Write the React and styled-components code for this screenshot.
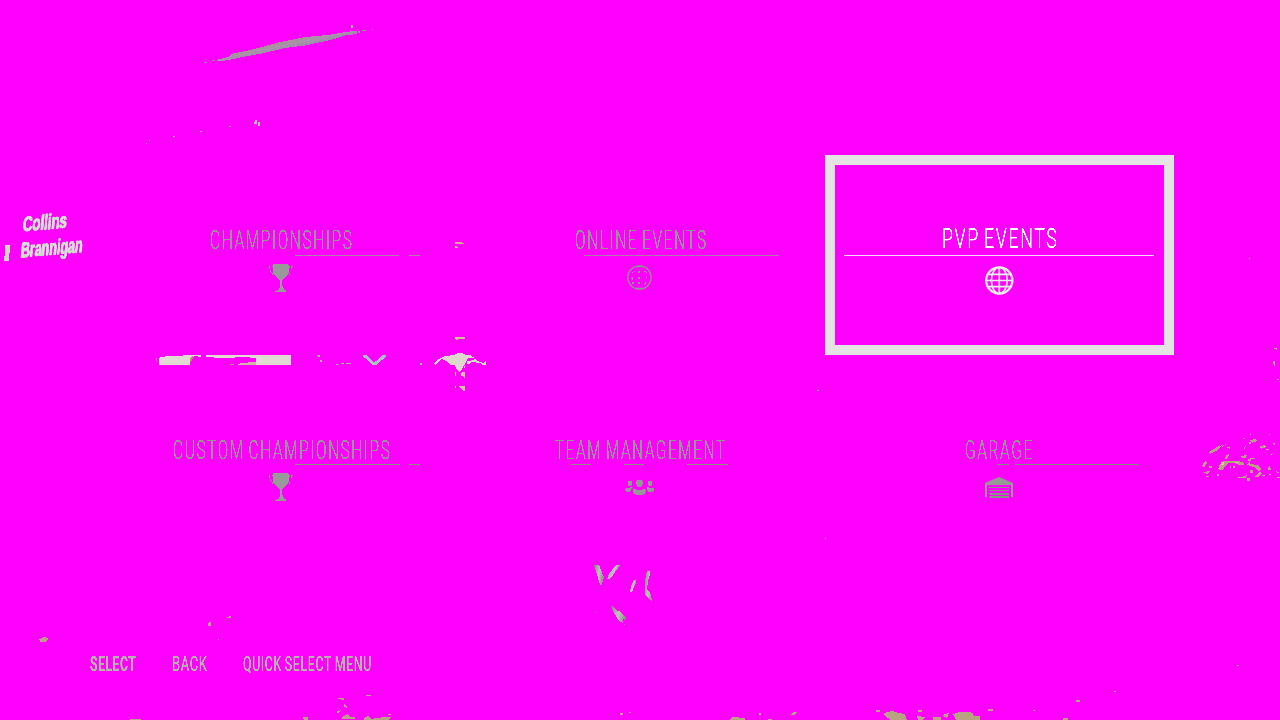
import React, { useLayoutEffect, useRef, useState } from 'react';
import styled, { createGlobalStyle } from 'styled-components';

const GlobalStyle = createGlobalStyle`
  * { box-sizing: border-box; }
  body { margin: 0; background: #ff00ff; overflow: hidden; }
`;

const Screen = styled.main`
  position: relative;
  width: 1280px;
  height: 720px;
  overflow: hidden;
  background: #ff00ff;
  font-family: Roboto, 'Liberation Sans', sans-serif;
  display: flex;
  flex-direction: column;
`;

const Scenery = styled.svg`
  position: absolute;
  inset: 0;
`;

const Decal = styled.div`
  position: absolute;
  left: ${(p) => p.$x}px;
  top: ${(p) => p.$y}px;
  transform: rotate(-5deg) skewX(-10deg);
  transform-origin: left bottom;
  font: 400 22px/22px 'Liberation Sans', sans-serif;
  color: #e2e3e0;
  -webkit-text-stroke: 0.6px #c4c6be;
`;

const TileGrid = styled.nav`
  position: relative;
  display: grid;
  grid-template-columns: repeat(3, 349px);
  grid-auto-rows: 200px;
  gap: 10px;
  padding: 155px 0 0 107px;
`;

const Tile = styled.section`
  display: flex;
  flex-direction: column;
  align-items: flex-start;
  border: 10px solid ${(p) => (p.$selected ? '#e4e4e4' : 'transparent')};
  padding-top: ${(p) => p.$pad}px;
  color: ${(p) => (p.$selected ? '#ffffff' : '#929892')};
`;

const TileTitle = styled.div`
  display: flex;
  justify-content: center;
  width: ${(p) => p.$w}px;
`;

const Rule = styled.div`
  display: flex;
  width: 310px;
  height: 1px;
  margin: ${(p) => p.$gap}px 0 0 9px;
`;

const RulePart = styled.i`
  height: 1px;
  width: ${(p) => p.$w}px;
  margin-left: ${(p) => p.$skip}px;
  background: ${(p) => p.$color};
`;

const IconSlot = styled.div`
  display: flex;
  justify-content: center;
  width: ${(p) => p.$w}px;
  margin-top: ${(p) => p.$gap}px;
  svg { display: block; }
`;

const FitBox = styled.div`
  width: ${(p) => p.$width}px;
  height: ${(p) => p.$size}px;
  font-size: ${(p) => p.$size}px;
  line-height: ${(p) => p.$size}px;
  font-weight: ${(p) => p.$weight};
  letter-spacing: ${(p) => p.$track}px;
  word-spacing: ${(p) => -p.$track}px;
  white-space: nowrap;
  filter: url(#${(p) => p.$edge});
`;

const FitText = styled.span`
  display: inline-block;
  transform-origin: left center;
`;

const Hints = styled.footer`
  position: relative;
  display: flex;
  padding: 89px 0 0 90px;
  color: #b3b6a6;
`;

const Hint = styled.div`
  margin-right: ${(p) => p.$after}px;
`;

function Condensed({ text, width, size, weight = 300, track = 2, edge = 'crisp' }) {
  const ref = useRef(null);
  const [scale, setScale] = useState(0.7);
  useLayoutEffect(() => {
    setScale(width / (ref.current.offsetWidth - track));
  }, [width, text, track]);
  return (
    <FitBox $width={width} $size={size} $weight={weight} $track={track} $edge={edge}>
      <FitText ref={ref} style={{ transform: `scaleX(${scale})` }}>{text}</FitText>
    </FitBox>
  );
}

const Trophy = () => (
  <svg width="24" height="28" viewBox="0 0 24 28" shapeRendering="crispEdges">
    <path fill="#999999" d="M4 0H19V1H20V9H19V11H18V12H17V13H16V14H15V15H14V16H13V22H14V24H15V26H17V28H6V27H8V26H10V24H11V16H10V15H9V14H8V13H7V12H6V11H5V10H4Z" />
    <path fill="#829b7c" d="M0 2h1v3H0zM1 6h1v2H1zM2 8h1v1H2zM3 2h1v1H3zM3 9h1v2H3zM20 2h1v2h-1zM22 2h2v1h-1v2h-1zM21 9h-1v2h1z" />
  </svg>
);

const Globe = () => (
  <svg width="29" height="29" viewBox="0 0 29 29" fill="none" stroke="#e9eee6">
    <circle cx="14.3" cy="14.5" r="13.1" strokeWidth="2.3" />
    <ellipse cx="14.3" cy="14.5" rx="7.9" ry="13" strokeWidth="1.7" />
    <path d="M14.3 1V28M1 14.5H28M4 8.3H25M4 20.7H25" strokeWidth="1.7" />
  </svg>
);

const FaintGlobe = () => (
  <svg width="25" height="25" viewBox="0 0 25 25" fill="none" stroke="#8b9988">
    <circle cx="12.5" cy="12.5" r="11.6" strokeWidth="1.2" />
    <path d="M9 1.5H16M9 23.5H16" strokeWidth="1.6" />
    <g fill="#8b9988" stroke="none">
      <path d="M11 6h2v2h-2zM11 12h2v2h-2zM11 17h2v2h-2zM7 6h1v1H7zM17 6h2v1h-2zM5 7h1v1H5zM19 7h1v1h-1zM4 13h2v1H4zM5 12h1v3H5zM19 12h1v1h-1zM5 17h2v2H5zM18 17h1v2h-1zM17 19h1v1h-1z" />
    </g>
  </svg>
);

const Crew = () => (
  <svg width="30" height="15" viewBox="0 0 30 15" fill="#959895">
    <path d="M12 0H17L18 2V4L16 7H13L11 4V2ZM3 1H7V5L6 6H4L3 5ZM23 1H27V5L26 6H24L23 5ZM8 9H11L12 10H17L18 9H20L21 11L20 14L17 15H12L9 14L8 12Z" />
    <path d="M1 8H5V7L7 7L8 8L6 9V11L4 12H2L0 10ZM22 7H24V8H29V11L27 12H24L22 10Z" />
  </svg>
);

const GarageIcon = () => (
  <svg width="28" height="21" viewBox="0 0 28 21" fill="#969896">
    <path d="M14 0L28 6V20H26V8H2V20H0V6Z" />
    <path fill="#829580" d="M4 10H24V11H4ZM4 13H24V14H4ZM4 16H24V17H5V18H24V17H4ZM4 19H24V21H5Z" />
  </svg>
);

const TILES = [
  {
    name: 'CHAMPIONSHIPS', width: 142, pad: 63,
    rule: [[169, 104], [10, 11]], color: '#b083a5', ruleGap: 2, icon: <Trophy />, iconGap: 8,
  },
  {
    name: 'ONLINE EVENTS', width: 131, pad: 63, titleW: 329, iconW: 327,
    rule: [[99, 195]], color: '#a97fa5', ruleGap: 2, icon: <FaintGlobe />, iconGap: 9,
  },
  {
    name: 'PVP EVENTS', width: 115, pad: 60, size: 28, weight: 300, selected: true, titleW: 329, iconW: 329,
    rule: [[0, 310]], color: '#ffd6ff', ruleGap: 2, icon: <Globe />, iconGap: 10,
  },
  {
    name: 'CUSTOM CHAMPIONSHIPS', width: 217, pad: 63, titleW: 329,
    rule: [[169, 105], [9, 11]], color: '#8b8f83', ruleGap: 1, icon: <Trophy />, iconGap: 8,
  },
  {
    name: 'TEAM MANAGEMENT', width: 170, pad: 63, titleW: 328,
    rule: [[86, 20], [33, 20], [43, 41]], color: '#8b8f83', ruleGap: 1, icon: <Crew />, iconGap: 15,
  },
  {
    name: 'GARAGE', width: 67, pad: 63,
    rule: [[153, 12], [6, 124]], color: '#828e7c', ruleGap: 1, icon: <GarageIcon />, iconGap: 12,
  },
];

const HINTS = [
  { name: 'SELECT', width: 46, after: 36, weight: 600 },
  { name: 'BACK', width: 35, after: 36, weight: 400 },
  { name: 'QUICK SELECT MENU', width: 128, after: 0, weight: 400 },
];

function Backdrop() {
  return (
    <Scenery width="1280" height="720" viewBox="0 0 1280 720" shapeRendering="crispEdges">
      <defs>
        <linearGradient id="streak" gradientUnits="userSpaceOnUse" x1="283" y1="41" x2="285" y2="50">
          <stop offset="0" stopColor="#a3958b" />
          <stop offset="0.5" stopColor="#ab92ab" />
          <stop offset="1" stopColor="#9d8aad" />
        </linearGradient>
        <linearGradient id="shard" x1="0" y1="0" x2="1" y2="0.4">
          <stop offset="0" stopColor="#85857f" />
          <stop offset="0.6" stopColor="#c4c4bd" />
          <stop offset="1" stopColor="#94948c" />
        </linearGradient>
        <filter id="crisp" x="-5%" y="-10%" width="110%" height="120%">
          <feComponentTransfer><feFuncA type="discrete" tableValues="0 0 1 1 1 1" /></feComponentTransfer>
        </filter>
        <filter id="firm" x="-5%" y="-10%" width="110%" height="120%">
          <feComponentTransfer><feFuncA type="linear" slope="2.6" intercept="-0.4" /></feComponentTransfer>
        </filter>
      </defs>

      <path fill="url(#streak)" d="M216 60L228 57L231 54L250 50L262 47L280 42L305 37L328 35L346 32L357 30.5V34L345 35.5L338 38L326 41L305 45.5L285 48L262 53.5L240 57.5L228 60.3L217 61Z" />
      <path fill="#9a8f98" d="M204 62h3v1h-3zM212 60h3v1h-3zM358 31h2v2h-2zM362 30h4v1h-4zM372 29h1v1h-1z" />
      <path fill="#a9a990" d="M351 25h2v3h-2zM146 143h1v1h-1zM149 140h1v1h-1zM173 136h2v1h-2zM200 131h2v1h-2zM229 126h2v1h-2z" />
      <path fill="#aebfba" d="M255 120h2v4h-3v-2h1zM258 122h2v4h-2z" />

      <path fill="#d5d6bd" d="M5 245H10L9 261H4L5 252Z" />

      <path fill="#cfae9a" d="M455 242h7v1h2v1h-9zM455 246h2v1h1v1h-3z" />
      <path fill="#d9c08f" d="M455 337h10v2h-7v1h-2v-1h-1z" />
      <path fill="#e1dad2" d="M160 357L170 356L195 355H201V357H198V356H194L192 358L190 364V365H159V359ZM206 355H291V365H256V358H250V357H235V358H214V357H206Z" />
      <path fill="#d3b5a2" d="M240 363h8v-1h8v3h-18v-1h2z" />
      <path fill="#b88a72" d="M156 358h1v3h-1zM230 364h4v1h-4zM190 359l1-2 2-1v2l-2 4h-1z" />
      <path fill="#aab294" d="M317 355h3v2h-2v-1h-1zM320 360h2v2h-2zM336 364h2v1h-2zM341 363h3v1h-3zM346 363h5v1h-5zM420 363h2v2h-2z" />
      <path d="M363 355H366L372 361L374 362L376 361L383 355H386V357L378 363L376 365H372L370 362L363 356.5Z" fill="#a9c2c6" />
      <path fill="#ddd8cb" d="M433 364L436 361L441 358L445 356L455 355V354L458 353H463V354L467 355H470L472 357H474V358L468 358L466 362L462 369L459 372L456 369L455 365H450L446 361L442 359L439 361L436 365ZM467 361H470L475 359L478 361L480 362L484 363L486 360V365H482L480 363L476 363L475 362H471L469 364H467Z" />
      <path fill="#d8c39b" d="M455 372h1v4h-1zM462 372h3v6h-1l-2-2h-1v-3zM455 386h1v2h-1zM459 386h6v5h-2l-2-2zM464 366h1v2h-1z" />

      <path fill="url(#shard)" d="M594 565H599L601 570L603.5 576V579L601 586L599 582L597 574Z" />
      <path fill="url(#shard)" d="M616 565H620L613 575L610 579H607L609 574Z" />
      <path fill="url(#shard)" d="M634 580H636V583L634 587L632 592H630L631 586Z" />
      <path fill="url(#shard)" d="M647 571H650V574L648 581L647 590L650 592L652.5 602L649 599L645 594V580Z" />
      <path fill="url(#shard)" d="M611 606H613L617 611H620L624 616L626 618L625 621L623 619V623L619 621L614 613Z" />
      <path fill="#8a8a82" d="M596 612h1v1h-1zM624 624h1v1h-1z" />

      <g fill="#b7a382">
        <path d="M39 639L42 638L44 637L48 638V640L46 641.5H40ZM209 622H211V626H208V624ZM227 617L231 616V618H227ZM218 639h1v1h-1z" />
        <path d="M1274 348h3v2h-1v-1h-2zM1273 361h2v5h-1v-2h-1zM1277 379h2v1h-2zM1249 258h1v1h-1zM817 390h2v1h-2zM825 538h1v1h-1z" />
        <path d="M1209 452L1214 449L1219 446L1222 445L1218 450L1210 454ZM1223 445L1227 444L1222 447ZM1227 447h3v2h-1v-1h-2z" />
        <path d="M1243 438h2v1h-2zM1250 434h1v1h-1zM1269 434h1v1h-1zM1250 440L1256 439L1257 441L1252 443ZM1259 447L1264 445L1266 447L1261 449ZM1273 443h2v2h-1v-1h-1z" />
        <path d="M1243 448L1246 446L1245 449ZM1266 449h3v1h-3zM1270 454L1275 453L1271 455ZM1249 442h2v2h-2z" />
        <path d="M1226 455L1229 454L1228 458L1225 459ZM1241 456L1247 455L1246 458H1242ZM1205 461L1207 463L1204 468L1202 466ZM1209 466h3v2h-3z" />
        <path d="M1218 469L1220 464L1224 461H1232L1238 461L1244 463V465H1239L1235 463H1229L1225 466L1223 470H1219ZM1230 466h1v2h-1zM1233 466h2v2h-2z" />
        <path d="M1249 462L1248 459L1252 458L1258 459H1251L1250 464L1257 465L1261 469L1259 471L1254 467L1247 465Z" />
        <path d="M1270 465L1271 470H1268V468ZM1204 472L1210 471L1208 474L1204 473ZM1217 474h2v2h-2zM1206 476h3v1h-3zM1236 478L1245 476L1247 475L1246 478ZM1250 470h3v3h-3zM1256 475L1260 472L1262 474L1258 477L1255 477ZM1247 478h3v3h-3zM1262 475h3v1h-3zM1276 471L1280 473H1277ZM1269 474h2v1h-2zM1277 477h3v1h-3z" />
        <path d="M338 698h6v2h-3v-1h-3zM366 695h5v1h-5zM344 704L347 706V708L344 707ZM335 712L341 710L338 713ZM303 717H308V720H304ZM342 717L348 714L350 717H355V719H342ZM364 718L368 716L372 719L376 718L385 717H391L388 720H364ZM388 714h3v1h-3zM130 719h11v1h-11z" />
        <path d="M620 713h3v2h-3zM629 712h2v1h-2zM730 719L733 717L745 718V720H730ZM759 713h2v2h-2zM768 719h4v1h-4zM790 715L793 712L797 712L794 715ZM876 710h4v2h-4zM884 713L892 711L899 713L905 714L907 720H891L885 716ZM918 710h4v2h-4zM917 716L925 717L923 720H918ZM933 717h8v3h-8zM942 715L949 713L947 718ZM953 714L960 712H968L973 713L974 716L980 716V720H956ZM988 709h5v2h-5zM1033 710h2v1h-2zM1063 718h5v2h-5zM1076 700h4v2h-4zM1114 691h2v1h-2zM1237 665h2v1h-2z" />
      </g>
      <path fill="#d7c8a4" d="M1221 462h3v3h-3zM1264 446h1v1h-1zM1235 462h3v1h-3z" />
    </Scenery>
  );
}

export default function App() {
  return (
    <Screen>
      <GlobalStyle />
      <Backdrop />
      <Decal $x={22} $y={214}><Condensed text="Collins" width={44} size={22} weight={700} track={0} edge="firm" /></Decal>
      <Decal $x={20} $y={240}><Condensed text="Brannigan" width={62} size={22} weight={700} track={0} edge="firm" /></Decal>
      <TileGrid>
        {TILES.map((t) => (
          <Tile key={t.name} $selected={t.selected} $pad={t.pad}>
            <TileTitle $w={t.titleW || 327}>
              <Condensed text={t.name} width={t.width} size={t.size || 25} weight={t.weight} track={2.5} edge={t.selected ? 'firm' : 'crisp'} />
            </TileTitle>
            <Rule $gap={t.ruleGap}>
              {t.rule.map(([skip, w], i) => (
                <RulePart key={i} $skip={skip} $w={w} $color={t.color} />
              ))}
            </Rule>
            <IconSlot $gap={t.iconGap} $w={t.iconW || 328}>{t.icon}</IconSlot>
          </Tile>
        ))}
      </TileGrid>
      <Hints>
        {HINTS.map((h) => (
          <Hint key={h.name} $after={h.after}>
            <Condensed text={h.name} width={h.width} size={20} weight={h.weight} track={1} edge="firm" />
          </Hint>
        ))}
      </Hints>
    </Screen>
  );
}
